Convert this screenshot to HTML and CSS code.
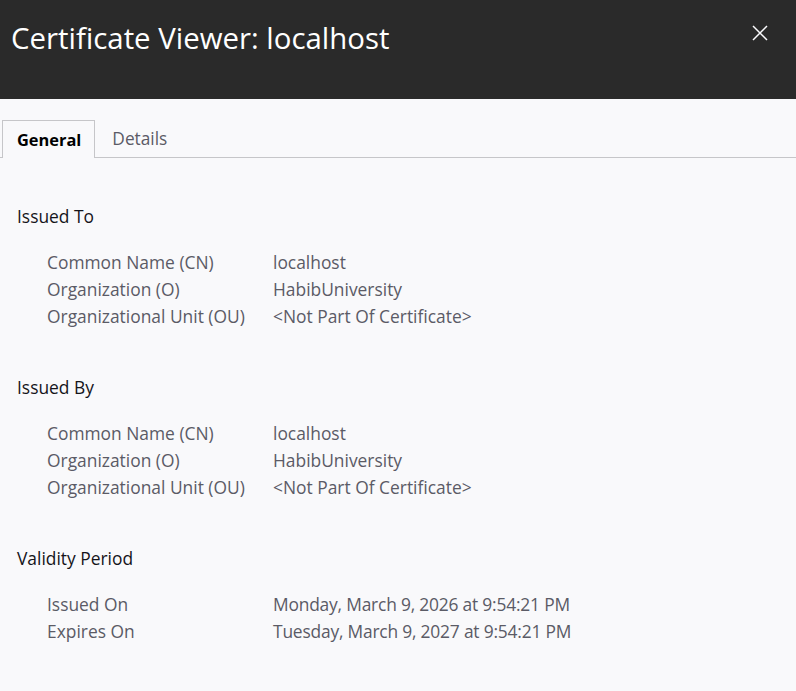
FILE: index.html
```html
<!DOCTYPE html>
<html>
<head>
<meta charset="utf-8">
<link rel="stylesheet" href="styles.css">
</head>
<body>
<header class="topbar">
  <h1 class="title">Certificate Viewer: localhost</h1>
  <svg class="close" width="16" height="16" viewBox="0 0 16 16"><path d="M1 1 L15 15 M15 1 L1 15" stroke="#fbfbfe" stroke-width="1.5" fill="none"/></svg>
</header>
<nav class="tabs">
  <div class="tab active">General</div>
  <div class="tab">Details</div>
</nav>
<main class="content">
  <section class="section">
    <h2 class="heading">Issued To</h2>
    <div class="rows">
      <div class="row"><span class="label">Common Name (CN)</span><span class="value">localhost</span></div>
      <div class="row"><span class="label">Organization (O)</span><span class="value">HabibUniversity</span></div>
      <div class="row"><span class="label">Organizational Unit (OU)</span><span class="value">&lt;Not Part Of Certificate&gt;</span></div>
    </div>
  </section>
  <section class="section">
    <h2 class="heading">Issued By</h2>
    <div class="rows">
      <div class="row"><span class="label">Common Name (CN)</span><span class="value">localhost</span></div>
      <div class="row"><span class="label">Organization (O)</span><span class="value">HabibUniversity</span></div>
      <div class="row"><span class="label">Organizational Unit (OU)</span><span class="value">&lt;Not Part Of Certificate&gt;</span></div>
    </div>
  </section>
  <section class="section">
    <h2 class="heading">Validity Period</h2>
    <div class="rows">
      <div class="row"><span class="label">Issued On</span><span class="value date">Monday, March 9, 2026 at 9:54:21 PM</span></div>
      <div class="row"><span class="label">Expires On</span><span class="value date">Tuesday, March 9, 2027 at 9:54:21 PM</span></div>
    </div>
  </section>
</main>
</body>
</html>
```
FILE: styles.css
```css
html, body {
  margin: 0;
  padding: 0;
}
body {
  background: #f9f9fb;
  font-family: "Open Sans", "Noto Sans", sans-serif;
  color: #15141a;
  width: 796px;
  height: 691px;
  overflow: hidden;
}
.topbar {
  height: 99px;
  background: #2a2a2a;
  display: flex;
  justify-content: space-between;
  align-items: flex-start;
  padding: 0 28px 0 11px;
  box-sizing: border-box;
}
.title {
  margin: 17px 0 0 0;
  font-size: 29.4px;
  font-weight: 500;
  color: #ffffff;
  line-height: 42px;
}
.close {
  margin-top: 25px;
}
.tabs {
  display: flex;
  margin-top: 21px;
  border-bottom: 1px solid #c6c6c9;
  height: 37px;
  padding-left: 2px;
}
.tab {
  font-size: 17.3px;
  line-height: 37px;
  padding: 0 15px 0 17px;
  color: #5b5b66;
}
.tab.active {
  color: #000;
  font-weight: 700;
  font-size: 16.4px;
  border: 1px solid #c6c6c9;
  border-bottom: none;
  background: #f9f9fb;
  margin-bottom: -1px;
  height: 38px;
  box-sizing: border-box;
  line-height: 37px;
  padding: 0 13px 0 14px;
}
.content {
  padding: 45px 0 0 17px;
}
.section {
  margin-bottom: 44px;
}
.heading {
  margin: 0;
  font-size: 17.4px;
  font-weight: 400;
  line-height: 27px;
  color: #15141a;
}
.rows {
  margin-top: 19px;
  padding-left: 30px;
}
.row {
  display: flex;
  height: 27px;
  line-height: 27px;
  font-size: 17.4px;
  color: #5b5b66;
}
.label {
  width: 226px;
  flex: none;
}
.date {
  letter-spacing: -0.2px;
}
```
